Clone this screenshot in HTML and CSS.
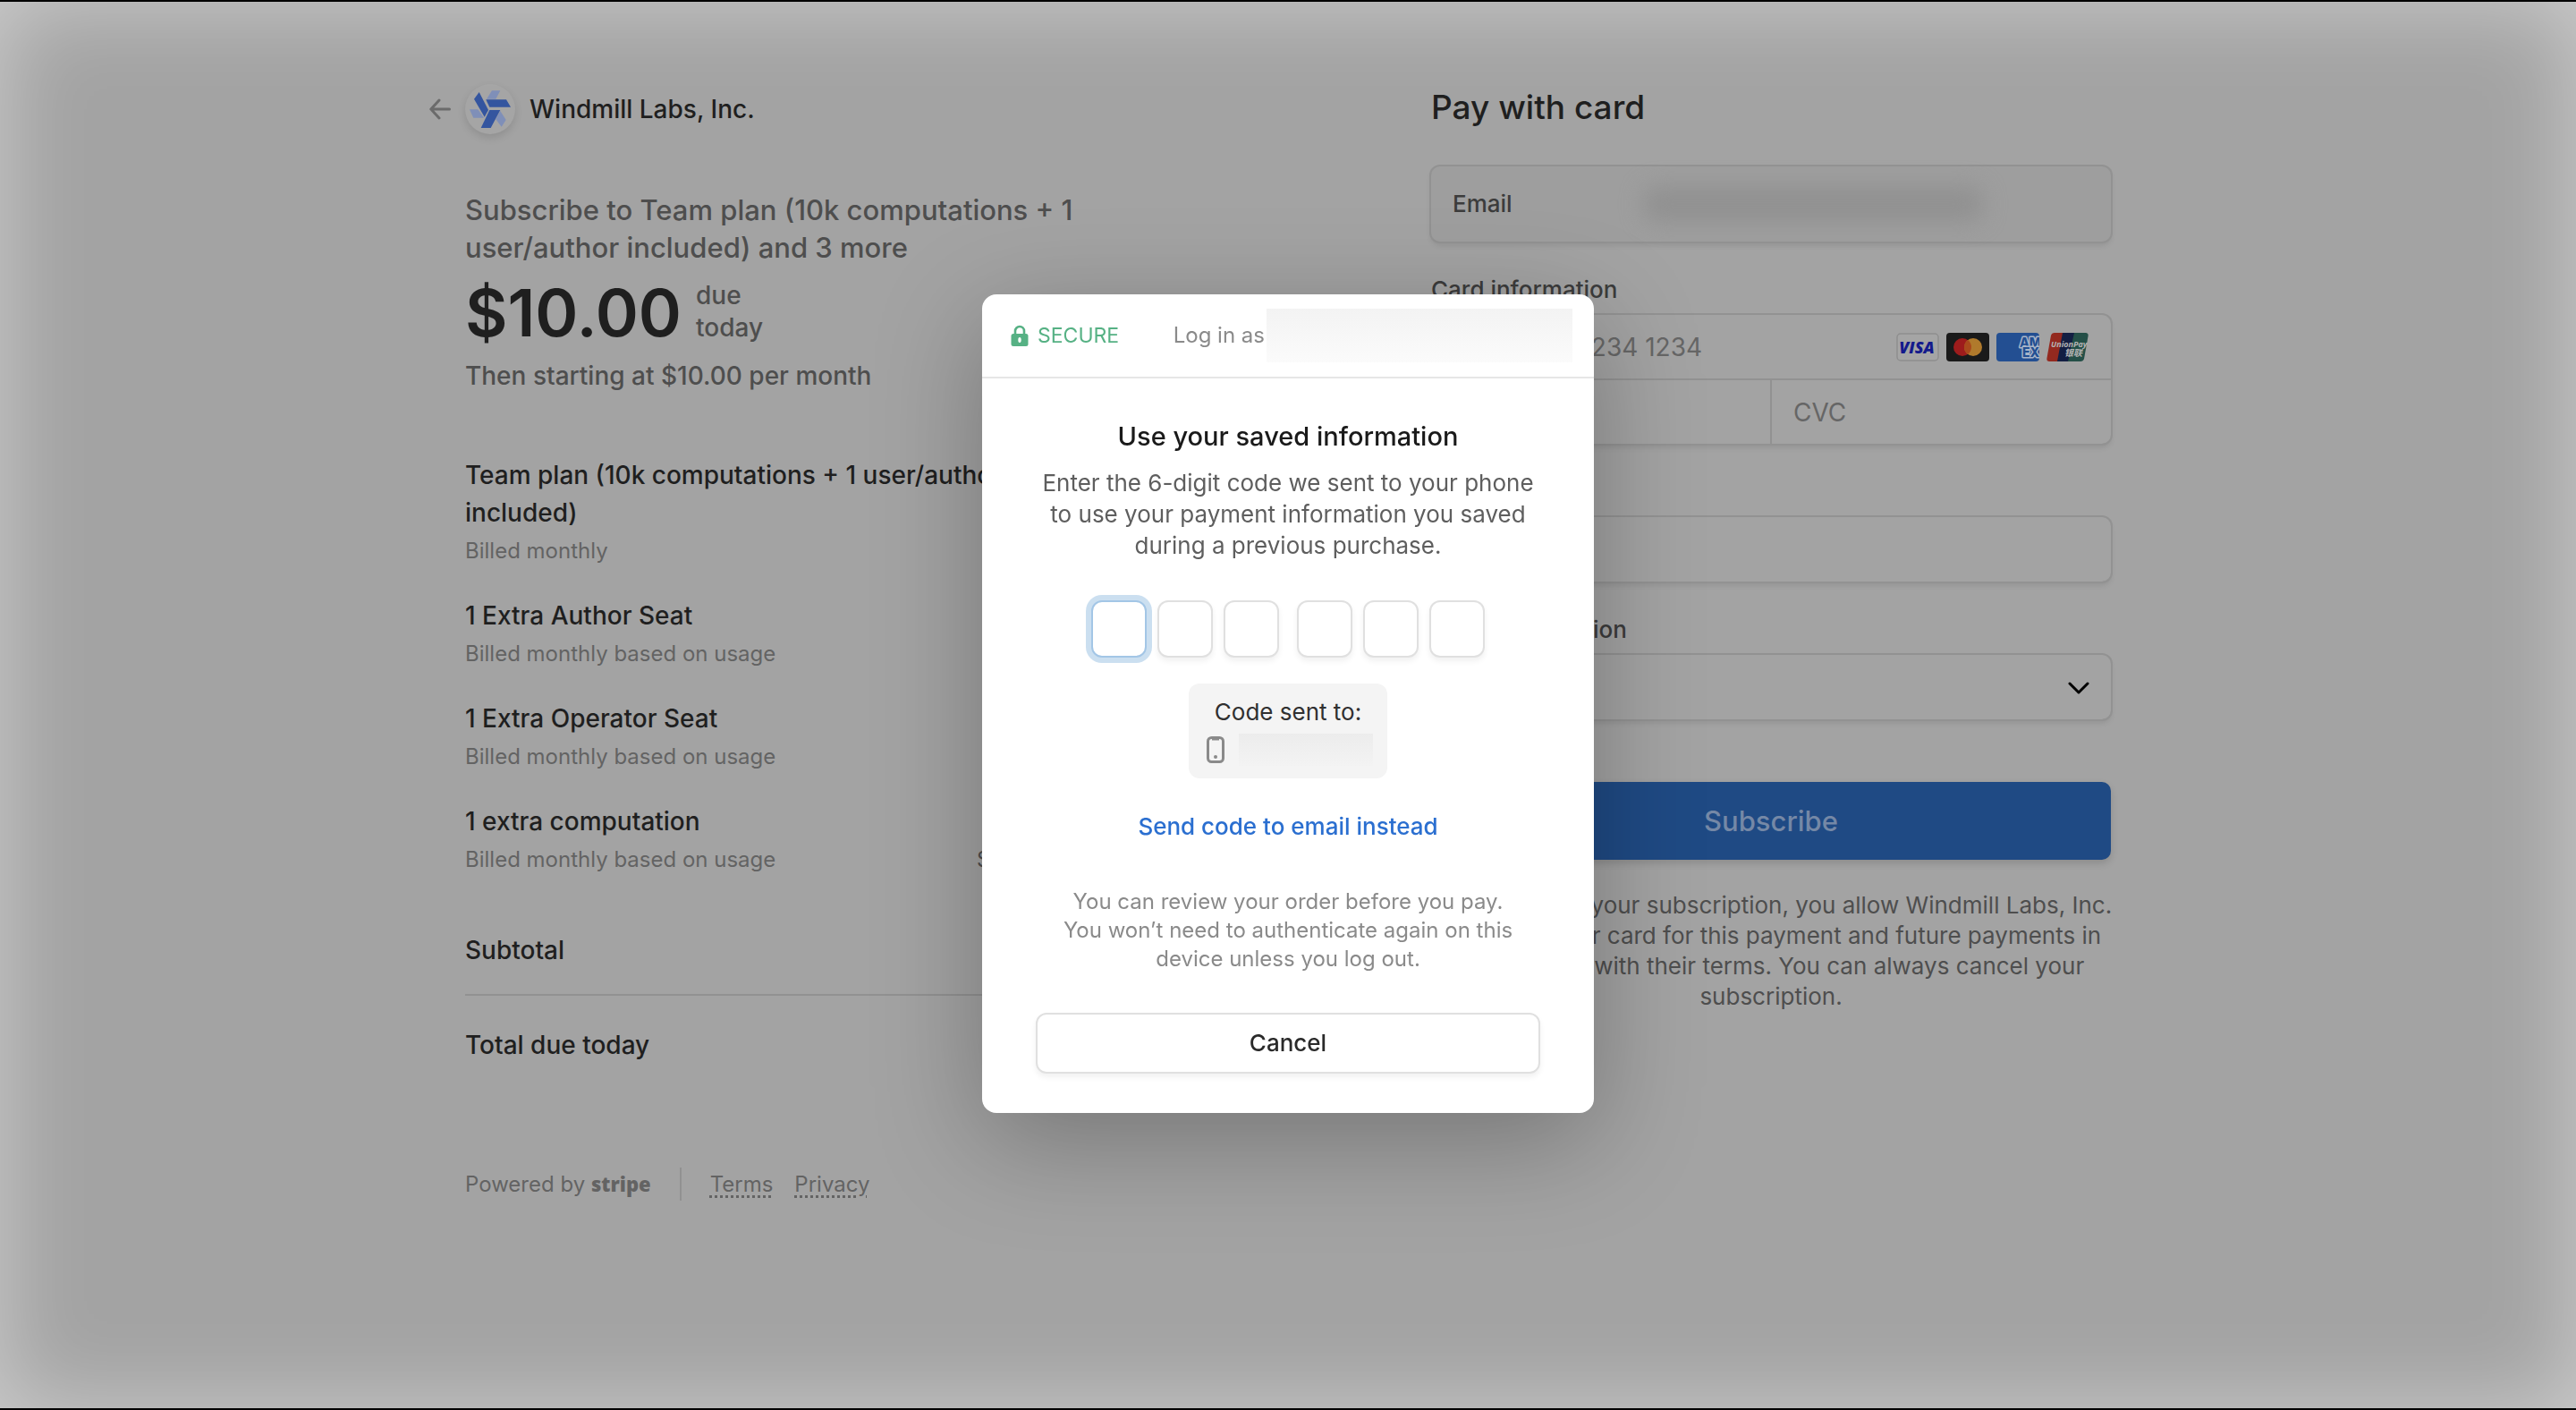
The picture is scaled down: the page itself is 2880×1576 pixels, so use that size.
FILE: index.html
```html
<!DOCTYPE html>
<html lang="en">
<head>
<meta charset="utf-8">
<title>Windmill Labs, Inc. checkout</title>
<meta name="viewport" content="width=device-width, initial-scale=1">
<link rel="stylesheet" href="styles.css">
</head>
<body>
<div class="page">
  <section class="summary">
    <header class="brand">
      <a class="back" href="#" aria-label="Back">
        <svg width="24" height="24" viewBox="0 0 24 24" fill="none" stroke="currentColor" stroke-width="3" stroke-linecap="round" stroke-linejoin="round"><path d="M22.500 12H2M11 2 1.800 12 11 22"/></svg>
      </a>
      <span class="logo">
        <svg width="48" height="44" viewBox="0 0 48 44"><g fill="#7f8fb8"><path d="M26 1.300h9.300l-5 9.400H20z"/><path d="M1 22.300h9.300l6.700 9.400H5.300z"/><path d="M35.300 24l6.400 10-5 7.700-6.400-8.400z"/></g><g fill="#34559f"><path d="M11.700 3L22 23l-4.300 7.700L6 10.700z"/><path d="M19.300 11.300H42l5 8.400H23.300z"/><path d="M23.300 23h12L24.700 43h-11z"/></g></svg>
      </span>
      <span class="brand-name">Windmill Labs, Inc.</span>
    </header>
    <h1 class="plan">Subscribe to Team plan (10k computations + 1<br>user/author included) and 3 more</h1>
    <div class="price-row"><span class="price">$10.00</span><span class="due">due<br>today</span></div>
    <p class="then">Then starting at $10.00 per month</p>
    <ul class="items">
      <li class="item"><div><div class="item-name">Team plan (10k computations + 1 user/author included)</div><div class="item-note">Billed monthly</div></div><div class="item-price">$10.00</div></li>
      <li class="item"><div><div class="item-name">1 Extra Author Seat</div><div class="item-note">Billed monthly based on usage</div></div></li>
      <li class="item"><div><div class="item-name">1 Extra Operator Seat</div><div class="item-note">Billed monthly based on usage</div></div></li>
      <li class="item"><div><div class="item-name">1 extra computation</div><div class="item-note">Billed monthly based on usage</div></div><div class="item-unit">$0.00 per unit</div></li>
    </ul>
    <div class="total subtotal"><span>Subtotal</span><span>$10.00</span></div>
    <div class="total"><span>Total due today</span><span>$10.00</span></div>
    <footer class="footer">
      <span class="powered">Powered by <b class="stripe">stripe</b></span>
      <nav class="legal"><a href="#">Terms</a><a href="#">Privacy</a></nav>
    </footer>
  </section>

  <form class="payment">
    <h2 class="pay-title">Pay with card</h2>
    <div class="box email"><span>Email</span><span class="email-value"></span></div>
    <div class="field">
      <label for="number">Card information</label>
      <div class="box card">
        <div class="card-number">
          <input id="number" type="text" placeholder="1234 1234 1234 1234">
          <span class="brands">
            <svg width="48" height="32" viewBox="0 0 48 32"><rect x="1" y="1" width="46" height="30" rx="4" fill="#a5a5a5" stroke="#8e8e8e" stroke-width="1.500"/><text x="23" y="23" text-anchor="middle" font-family="Open Sans, sans-serif" font-weight="800" font-style="italic" font-size="18" fill="#131a8c">VISA</text></svg>
            <svg width="48" height="32" viewBox="0 0 48 32"><rect width="48" height="32" rx="4" fill="#1a1a1a"/><circle cx="18" cy="16" r="10" fill="#9e1c1c"/><circle cx="30" cy="16" r="10" fill="#b07a2c"/><path d="M24 8a10 10 0 0 1 0 16 10 10 0 0 1 0-16z" fill="#a9491c"/></svg>
            <svg width="48" height="32" viewBox="0 0 48 32"><rect width="48" height="32" rx="4" fill="#234f92"/><g font-family="Inter, sans-serif" font-weight="800" font-size="14" fill="#234f92" stroke="#a9b5c9" stroke-width="3" stroke-linejoin="round" paint-order="stroke"><text x="26" y="16">AM</text><text x="29" y="27">EX</text></g></svg>
            <svg width="48" height="32" viewBox="0 0 48 32"><path d="M9 0h10l-6 32H4c-3 0-4-1-3.500-4L5 3c.5-2 2-3 4-3z" fill="#93291f"/><path d="M18 0h14l-6 32H12z" fill="#131f43"/><path d="M31 0h12c3 0 4 1 3.500 4L42 29c-.5 2-2 3-4 3H24z" fill="#244f47"/><g fill="#b4b4b4" font-style="italic" font-weight="700"><text x="5" y="16" font-family="Open Sans, sans-serif" font-size="9">UnionPay</text><text x="20" y="26" font-family="Noto Sans CJK SC, sans-serif" font-size="10">银联</text></g></svg>
          </span>
        </div>
        <div class="card-extra">
          <input type="text" placeholder="MM / YY" aria-label="Expiration">
          <input type="text" placeholder="CVC" aria-label="CVC">
        </div>
      </div>
    </div>
    <div class="field">
      <label for="name">Name on card</label>
      <input id="name" class="box line" type="text">
    </div>
    <div class="field">
      <label for="country">Country or region</label>
      <div class="select-wrap">
        <select id="country" class="box line"><option>France</option></select>
        <svg class="chevron" width="24" height="14" viewBox="0 0 24 14" fill="none" stroke="#000" stroke-width="3" stroke-linecap="round" stroke-linejoin="round"><path d="M2 2l10 10L22 2"/></svg>
      </div>
    </div>
    <button class="subscribe" type="button">Subscribe</button>
    <p class="terms">By confirming your subscription, you allow Windmill Labs, Inc.<br>to charge your card for this payment and future payments in<br>accordance with their terms. You can always cancel your<br>subscription.</p>
  </form>
</div>

<div class="overlay">
  <dialog class="modal" open aria-labelledby="modal-title">
    <header class="modal-head">
      <svg width="20" height="24" viewBox="0 0 20 24"><path d="M5 11V7a5 5 0 0 1 10 0v4" fill="none" stroke="#56b184" stroke-width="2.600"/><rect x="0.500" y="10" width="19" height="14" rx="2.500" fill="#56b184"/><ellipse cx="10" cy="17" rx="1.700" ry="3" fill="#fff"/></svg>
      <span class="secure">SECURE</span>
      <span class="login">Log in as</span>
      <span class="login-name"></span>
    </header>
    <div class="modal-body">
      <h2 id="modal-title">Use your saved information</h2>
      <p class="lead">Enter the 6-digit code we sent to your phone<br>to use your payment information you saved<br>during a previous purchase.</p>
      <div class="codes">
        <div class="code-group"><input class="focused" type="text" aria-label="Digit 1"><input type="text" aria-label="Digit 2"><input type="text" aria-label="Digit 3"></div>
        <div class="code-group"><input type="text" aria-label="Digit 4"><input type="text" aria-label="Digit 5"><input type="text" aria-label="Digit 6"></div>
      </div>
      <div class="sent">
        <span>Code sent to:</span>
        <span class="phone">
          <svg width="20" height="30" viewBox="0 0 20 30"><rect x="1.500" y="1.500" width="17" height="27" rx="4" fill="none" stroke="#8a8a8a" stroke-width="3"/><path d="M6 2h8v2.500H6z" fill="#8a8a8a"/><circle cx="10" cy="23" r="2" fill="#8a8a8a"/></svg>
          <span class="phone-value"></span>
        </span>
      </div>
      <a class="resend" href="#">Send code to email instead</a>
      <p class="hint">You can review your order before you pay.<br>You won’t need to authenticate again on this<br>device unless you log out.</p>
      <button class="cancel" type="button">Cancel</button>
    </div>
  </dialog>
</div>
</body>
</html>
```
FILE: styles.css
```css
* { box-sizing: border-box; margin: 0; }

body {
  min-height: 100vh;
  border-top: 2px solid #000;
  border-bottom: 2px solid #000;
  background: #a3a3a3;
  color: #1f1f1f;
  font: 500 28px/42px Inter, "Liberation Sans", sans-serif;
}

input, select, button { font: inherit; color: inherit; }

.page {
  display: grid;
  grid-template-columns: repeat(2, minmax(0, 760px));
  gap: 320px;
  justify-content: center;
  padding: 92px 40px 0;
}

/* Order summary */
.brand { display: flex; align-items: center; height: 56px; }
.back { display: flex; width: 40px; margin-left: -40px; color: #6b6b6b; }
.logo {
  display: flex;
  align-items: center;
  justify-content: center;
  width: 56px;
  height: 56px;
  margin-right: 16px;
  border-radius: 50%;
  background: #a5a5a5;
  box-shadow: 0 4px 10px rgba(0, 0, 0, .12);
}
.plan { margin-top: 64px; color: #4e4e4e; font-size: 31px; font-weight: 500; }
.price-row { display: flex; gap: 16px; margin-top: 14px; }
.price { font-size: 73px; font-weight: 600; line-height: 76px; }
.due { color: #4e4e4e; line-height: 36px; }
.then { margin-top: 12px; color: #4e4e4e; line-height: 40px; }

.items {
  display: grid;
  gap: 33px;
  margin-top: 70px;
  padding: 0;
  list-style: none;
}
.item { display: flex; justify-content: space-between; gap: 24px; }
.item-note { margin-top: 4px; color: #636363; font-size: 24px; font-weight: 400; line-height: 36px; }
.item-unit { width: 188px; margin-top: 46px; color: #4e4e4e; font-size: 24px; font-weight: 400; line-height: 36px; }

.total { display: flex; justify-content: space-between; padding-top: 34px; }
.subtotal { margin-top: 62px; padding: 0 0 28px; border-bottom: 2px solid #919191; }

.footer {
  display: flex;
  align-items: center;
  margin-top: 116px;
  color: #636363;
  font-size: 24px;
  font-weight: 400;
  line-height: 36px;
}
.powered { padding-right: 32px; border-right: 2px solid #919191; }
.stripe { font-family: "Open Sans", sans-serif; font-size: 22px; font-weight: 800; }
.legal { display: flex; gap: 24px; padding-left: 32px; }
.legal a {
  color: inherit;
  text-decoration: underline dotted 3px;
  text-underline-offset: 4px;
}

/* Payment form */
.payment { display: flex; flex-direction: column; }
.pay-title { margin: 2px 0 42px; font-size: 37px; font-weight: 500; line-height: 48px; }
.box {
  width: 100%;
  border: 0;
  border-radius: 10px;
  background: transparent;
  box-shadow: 0 0 0 2px #929292, 0 4px 6px rgba(0, 0, 0, .1);
}
.email {
  display: flex;
  align-items: center;
  height: 84px;
  padding: 0 24px;
  background: #9e9e9e;
  color: #3c3c3c;
  font-size: 26px;
}
.email-value {
  width: 380px;
  height: 40px;
  margin-left: 146px;
  border-radius: 16px;
  background: #919191;
  filter: blur(12px);
}
.field { margin-top: 38px; }
.field label { display: block; margin-bottom: 12px; color: #3c3c3c; font-size: 26px; line-height: 32px; }
.card input {
  flex: 1;
  min-width: 0;
  height: 71px;
  padding: 0 24px;
  border: 0;
  outline: 0;
  background: transparent;
  font-weight: 400;
}
.card input::placeholder { color: #666; opacity: 1; }
.card-number { display: flex; align-items: center; padding-right: 24px; border-bottom: 2px solid #929292; }
.brands { display: flex; gap: 8px; }
.card-extra { display: flex; }
.card-extra input + input { border-left: 2px solid #929292; }
.line { display: block; height: 72px; padding: 0 24px; }
.select-wrap { position: relative; }
.select-wrap select { appearance: none; }
.chevron { position: absolute; top: 30px; right: 24px; }
.subscribe {
  height: 87px;
  margin-top: 70px;
  border: 0;
  border-radius: 10px;
  background: #1f4a84;
  box-shadow: 0 4px 8px rgba(0, 0, 0, .14);
  color: #7588a6;
  font-size: 31px;
}
.terms { margin-top: 34px; color: #4e4e4e; font-size: 26px; font-weight: 400; line-height: 34px; text-align: center; white-space: nowrap; }

/* Verification dialog */
.overlay {
  position: fixed;
  inset: 2px 0;
  display: flex;
  align-items: center;
  justify-content: center;
  padding-bottom: 4px;
  box-shadow: inset 0 0 100px rgba(255, 255, 255, .46);
}
.modal {
  position: static;
  width: 684px;
  max-width: 100%;
  margin: 0;
  padding: 0;
  border: 0;
  border-radius: 16px;
  background: #fff;
  box-shadow: 0 30px 120px rgba(0, 0, 0, .28);
  color: #1a1a1a;
}
.modal-head {
  display: flex;
  align-items: center;
  height: 94px;
  padding: 0 24px 0 32px;
  border-bottom: 2px solid #e6e6e6;
  font-size: 24px;
  font-weight: 400;
}
.secure { margin-left: 10px; color: #56b184; font-size: 23px; }
.login { margin-left: auto; color: #8a8a8a; }
.login-name { width: 342px; height: 60px; margin-left: 2px; background: linear-gradient(#f3f3f3, #fbfbfb); }
.modal-body {
  display: flex;
  flex-direction: column;
  align-items: center;
  padding: 47px 60px 44px;
  font-size: 26px;
  line-height: 36px;
  text-align: center;
}
.modal-body h2 { font-size: 29px; font-weight: 500; line-height: 36px; }
.lead { margin-top: 16px; color: #5e5e5e; font-weight: 400; line-height: 35px; }
.codes { display: flex; gap: 20px; margin-top: 44px; }
.code-group { display: flex; gap: 12px; }
.code-group input {
  width: 62px;
  height: 64px;
  padding: 0;
  border: 2px solid #e0e0e0;
  border-radius: 12px;
  outline: 0;
  background: #fff;
  box-shadow: 0 4px 6px rgba(0, 0, 0, .06);
  text-align: center;
}
.code-group .focused { border-color: #a3c6e6; box-shadow: 0 0 0 6px #cbdff0; }
.sent {
  display: flex;
  flex-direction: column;
  gap: 6px;
  width: 222px;
  margin-top: 29px;
  padding: 14px 16px;
  border-radius: 12px;
  background: #f4f4f4;
  color: #303030;
  font-weight: 400;
}
.phone { display: flex; align-items: center; gap: 16px; height: 36px; padding-left: 4px; }
.phone-value { flex: 1; height: 36px; background: linear-gradient(#ececec, #f3f3f3); }
.resend { margin-top: 36px; color: #2b6fd0; text-decoration: none; }
.hint { margin-top: 50px; color: #8a8a8a; font-size: 24px; font-weight: 400; line-height: 32px; }
.cancel {
  width: 100%;
  height: 68px;
  margin-top: 44px;
  border: 2px solid #e0e0e0;
  border-radius: 12px;
  background: #fff;
  box-shadow: 0 4px 6px rgba(0, 0, 0, .06);
  color: #2a2a2a;
}
```
